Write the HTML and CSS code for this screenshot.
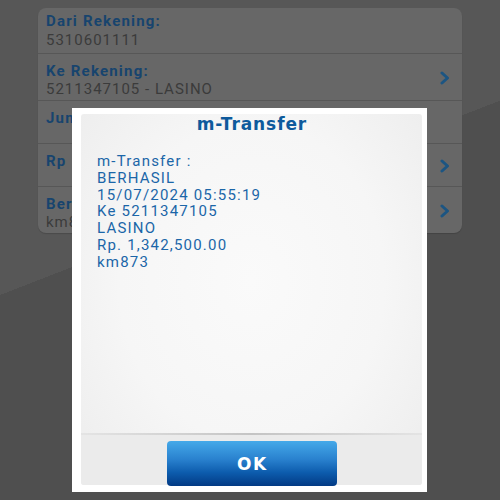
FILE: index.html
```html
<!DOCTYPE html>
<html>
<head>
<meta charset="utf-8">
<link rel="stylesheet" href="styles.css">
</head>
<body>
<div class="screen">
  <div class="card">
    <div class="row row-first">
      <div class="texts">
        <div class="label">Dari Rekening:</div>
        <div class="value">5310601111</div>
      </div>
    </div>
    <div class="row row-tall">
      <div class="texts">
        <div class="label">Ke Rekening:</div>
        <div class="value">5211347105 - LASINO</div>
      </div>
      <svg class="chev" viewBox="0 0 10 14" width="10" height="14"><path d="M2 2 L7.5 7 L2 12" fill="none" stroke="currentColor" stroke-width="3" stroke-linecap="round" stroke-linejoin="round"/></svg>
    </div>
    <div class="row row-short">
      <div class="texts">
        <div class="label">Jumlah:</div>
      </div>
    </div>
    <div class="row row-short">
      <div class="texts">
        <div class="label">Rp</div>
      </div>
      <svg class="chev" viewBox="0 0 10 14" width="10" height="14"><path d="M2 2 L7.5 7 L2 12" fill="none" stroke="currentColor" stroke-width="3" stroke-linecap="round" stroke-linejoin="round"/></svg>
    </div>
    <div class="row row-tall">
      <div class="texts">
        <div class="label">Berita:</div>
        <div class="value">km873</div>
      </div>
      <svg class="chev" viewBox="0 0 10 14" width="10" height="14"><path d="M2 2 L7.5 7 L2 12" fill="none" stroke="currentColor" stroke-width="3" stroke-linecap="round" stroke-linejoin="round"/></svg>
    </div>
  </div>

  <div class="modal">
    <div class="panel">
      <div class="title">m-Transfer</div>
      <div class="message">
        <div>m-Transfer :</div>
        <div>BERHASIL</div>
        <div>15/07/2024 05:55:19</div>
        <div>Ke 5211347105</div>
        <div>LASINO</div>
        <div>Rp. 1,342,500.00</div>
        <div>km873</div>
      </div>
      <div class="footer">
        <button class="ok">OK</button>
      </div>
    </div>
  </div>
</div>
</body>
</html>
```

FILE: styles.css
```css
html, body {
  margin: 0;
  padding: 0;
}

body {
  font-family: Roboto, "Noto Sans", sans-serif;
}

.screen {
  position: relative;
  width: 500px;
  height: 500px;
  overflow: hidden;
  padding-top: 8px;
  box-sizing: border-box;
  background: linear-gradient(158.75deg, #575757 0, #575757 275px, #4f4f4f 275px, #4f4f4f 100%);
}

.card {
  margin-left: 38px;
  width: 424px;
  background: #676767;
  border-radius: 8px;
  box-shadow: 0 1px 1px rgba(0, 0, 0, 0.15);
  overflow: hidden;
}

.row {
  display: flex;
  align-items: flex-start;
  justify-content: space-between;
  box-sizing: border-box;
  padding: 7.6px 12px 0 8px;
  border-top: 1px solid #575757;
}

.row-first {
  height: 45px;
  padding-top: 4.3px;
  border-top: none;
}

.row-tall {
  height: 47px;
}

.row-short {
  height: 43px;
}

.label {
  font-weight: 700;
  font-size: 15px;
  line-height: 18.5px;
  letter-spacing: 1.2px;
  color: #17446e;
}

.value {
  font-size: 15px;
  line-height: 18.5px;
  letter-spacing: 1px;
  color: #3b3b3b;
}

.chev {
  align-self: center;
  color: #1c5582;
  margin-top: -6px;
}

.modal {
  position: absolute;
  left: 72px;
  top: 108px;
  width: 355px;
  height: 384px;
  box-sizing: border-box;
  background: #ffffff;
  padding: 6px 5px 7px 9px;
}

.panel {
  height: 100%;
  display: flex;
  flex-direction: column;
  border-radius: 3px;
  background: radial-gradient(ellipse at 50% 45%, #fafafa 0%, #f6f6f6 55%, #ececec 100%);
}

.title {
  text-align: center;
  font-family: "DejaVu Sans", Verdana, sans-serif;
  font-weight: 700;
  font-size: 17px;
  line-height: 18px;
  letter-spacing: 0.9px;
  text-indent: 0.9px;
  padding-top: 1px;
  color: #0e5a9c;
}

.message {
  flex: 1;
  padding: 20px 0 0 16px;
  font-size: 15px;
  line-height: 16.8px;
  letter-spacing: 1.2px;
  color: #1b66a8;
}

.footer {
  display: flex;
  justify-content: center;
  height: 52px;
  box-sizing: border-box;
  padding-top: 6px;
  background: #ebebeb;
  border-radius: 0 0 3px 3px;
  border-top: 2px solid transparent;
  border-image: linear-gradient(90deg, #e4e4e4, #c4c4c4 50%, #e4e4e4) 1;
}

.ok {
  width: 170px;
  height: 45px;
  border: none;
  border-radius: 4px;
  background: linear-gradient(180deg, #45a9e9 0%, #2a82cf 40%, #0d5cad 70%, #023a84 100%);
  color: #ffffff;
  font-family: "DejaVu Sans", Verdana, sans-serif;
  font-weight: 700;
  font-size: 17px;
  letter-spacing: 1.5px;
  text-indent: 1.5px;
  padding: 0;
}
```
